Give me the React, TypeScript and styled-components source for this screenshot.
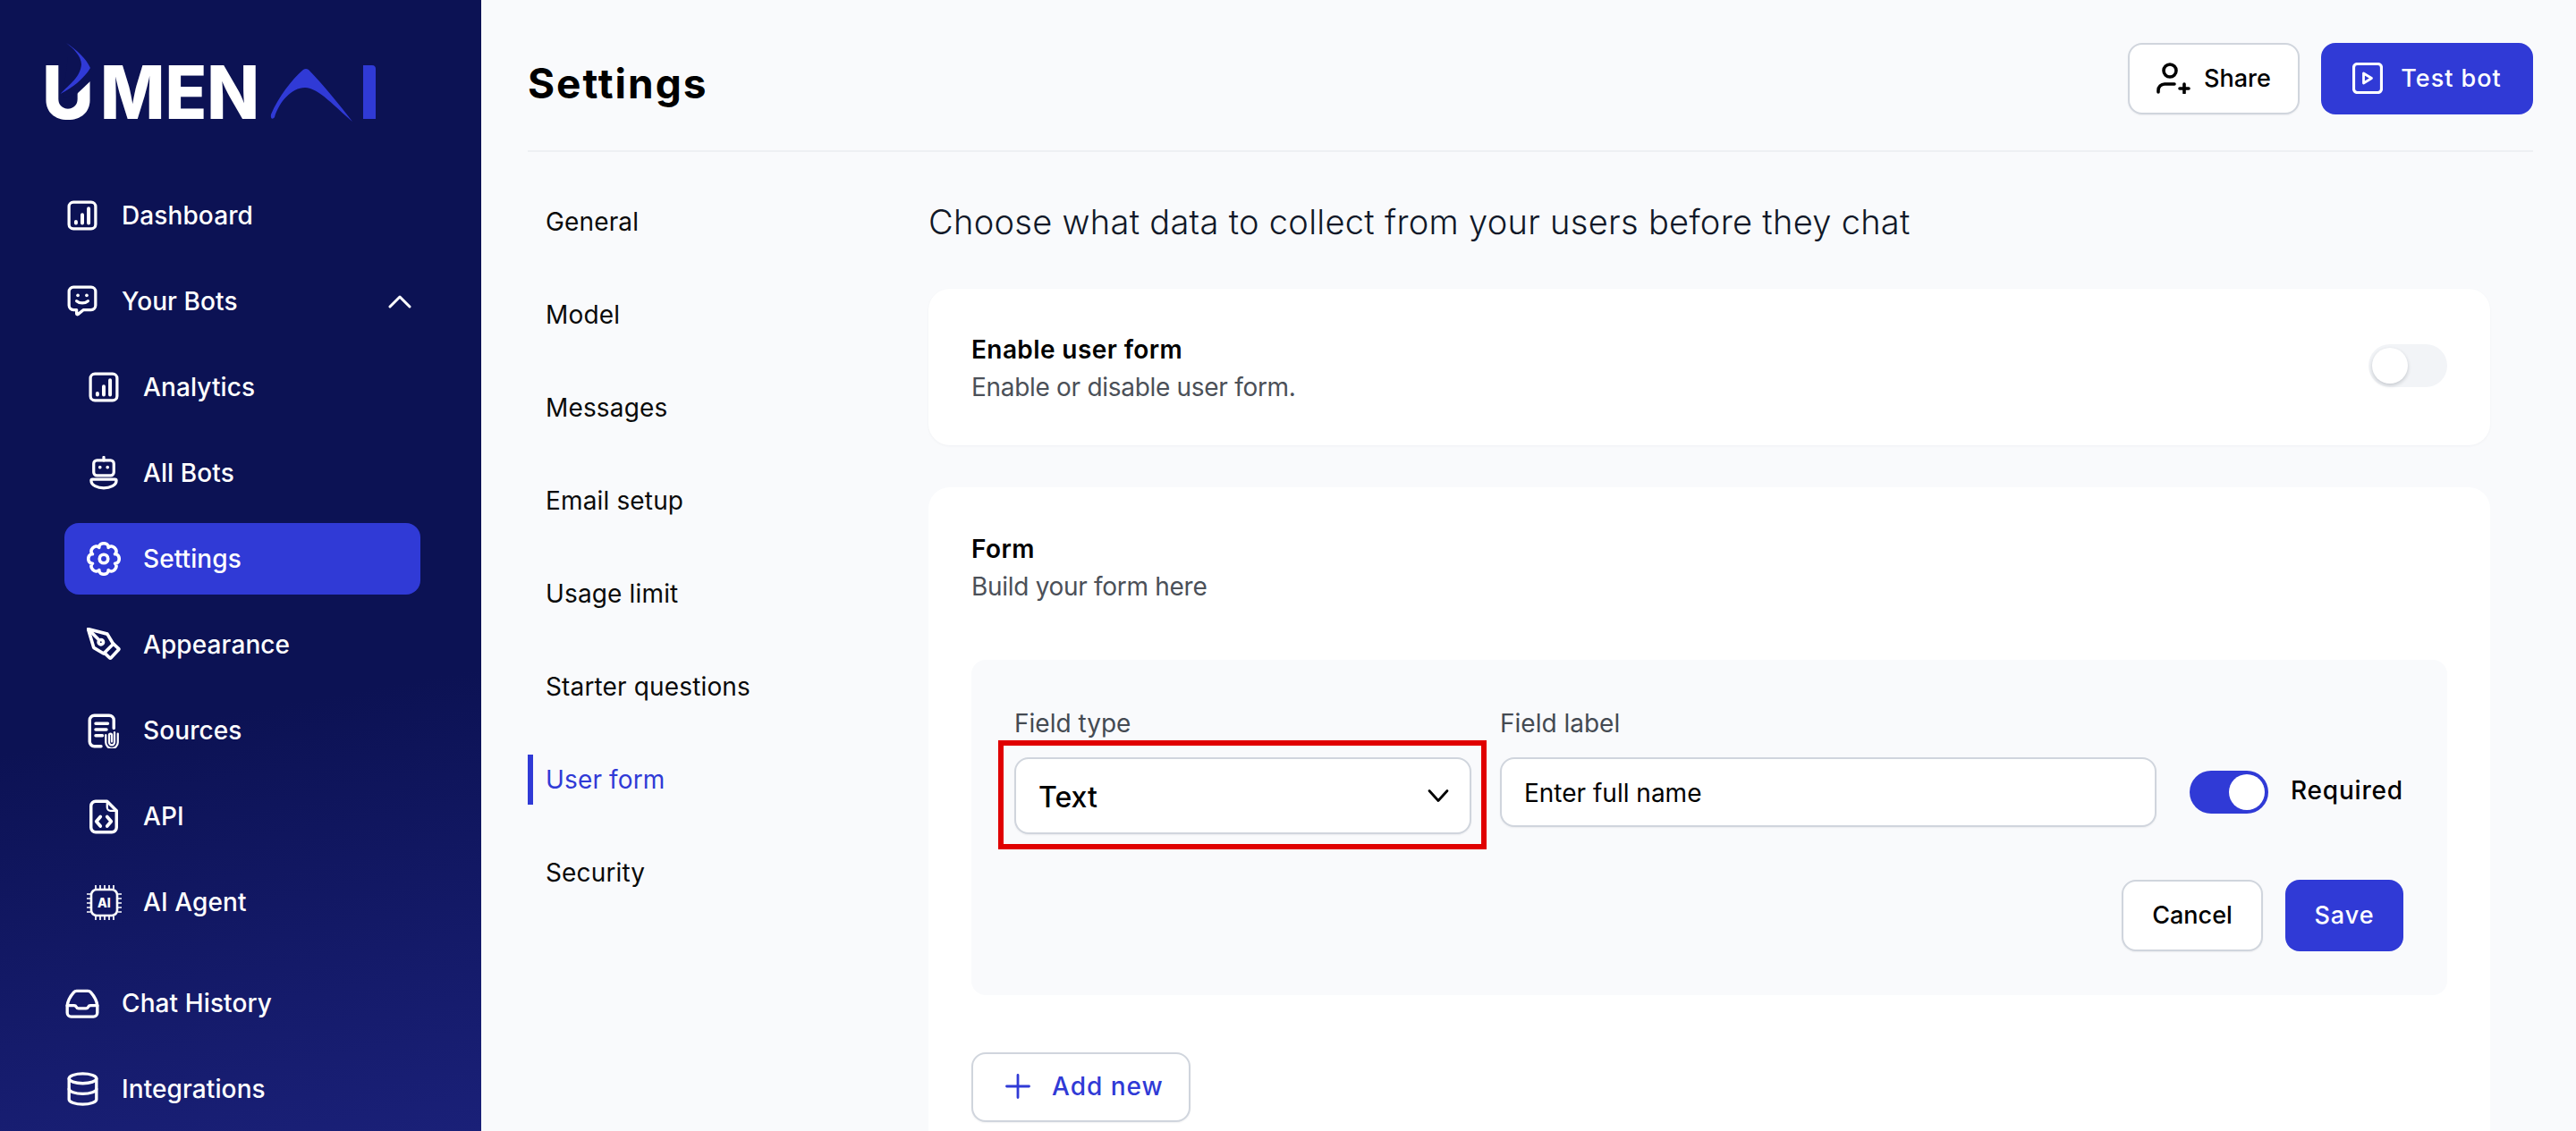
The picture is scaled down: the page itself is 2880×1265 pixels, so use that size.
import React from "react";
import styled, { createGlobalStyle } from "styled-components";

const PRIMARY = "#303ad6";
const BORDER = "#d0d5dd";

const GlobalStyle = createGlobalStyle`
  html, body {
    margin: 0;
    height: 1265px;
    overflow: hidden;
    background: #f9fafc;
    font-family: Inter, "Liberation Sans", sans-serif;
    color: #0a0a0a;
  }
  * { box-sizing: border-box; }
`;

const strokeProps = {
  fill: "none",
  stroke: "currentColor",
  strokeWidth: 2.3,
  strokeLinecap: "round" as const,
  strokeLinejoin: "round" as const,
};

// eight rounded lobes round the hub
const polar = (r: number, deg: number) => {
  const a = (deg * Math.PI) / 180;
  return `${(12 + r * Math.cos(a)).toFixed(2)} ${(12 + r * Math.sin(a)).toFixed(2)}`;
};

const gearPath = (() => {
  let d = `M${polar(8.6, -22.5)}`;
  for (let i = 0; i < 8; i++) {
    const mid = i * 45;
    d += `C${polar(12.4, mid - 17)} ${polar(12.4, mid + 17)} ${polar(8.6, mid + 22.5)}`;
  }
  return d + "z";
})();

interface IconProps {
  size?: number;
}

const BarsIcon: React.FC<IconProps> = ({ size = 34 }) => (
  <svg width={size} height={size} viewBox="0 0 24 24" {...strokeProps}>
    <rect x="1.5" y="1.5" width="21" height="21" rx="3.5" />
    <path d="M7 18v-1M12 18v-6.5M17 18V6.5" strokeWidth="2.8" />
  </svg>
);

const BotChatIcon: React.FC<IconProps> = ({ size = 34 }) => (
  <svg width={size} height={size + 2} viewBox="0 0 24 25.5" {...strokeProps}>
    <path d="M5 1.5h14a3.5 3.5 0 0 1 3.5 3.5v11a3.5 3.5 0 0 1-3.5 3.5h-6l-4.5 3.6c-.5.3-1 0-1-.5v-3.1H5A3.5 3.5 0 0 1 1.5 16V5A3.5 3.5 0 0 1 5 1.5z" />
    <circle cx="8.5" cy="8" r="1.3" fill="currentColor" stroke="none" />
    <circle cx="15.5" cy="8" r="1.3" fill="currentColor" stroke="none" />
    <path d="M7.5 12.5c2.6 2.2 6.4 2.2 9 0" />
  </svg>
);

const AllBotsIcon: React.FC<IconProps> = ({ size = 34 }) => (
  <svg width={size} height={size + 4} viewBox="0 0 24 27" {...strokeProps}>
    <path d="M12 1v2.5" />
    <rect x="4" y="3.5" width="16" height="12" rx="2.6" />
    <circle cx="9" cy="9" r="1.3" fill="currentColor" stroke="none" />
    <circle cx="15" cy="9" r="1.3" fill="currentColor" stroke="none" />
    <path d="M3 18.5h18c.6 0 1 .4 1 1 0 3.8-5 6-10 6s-10-2.200-10-6c0-.6.4-1 1-1z" />
  </svg>
);

const GearIcon: React.FC<IconProps> = ({ size = 38 }) => (
  <svg width={size} height={size} viewBox="0 0 24 24" {...strokeProps}>
    <path d={gearPath} />
    <circle cx="12" cy="12" r="3" />
  </svg>
);

const PenIcon: React.FC<IconProps> = ({ size = 38 }) => (
  <svg width={size} height={size} viewBox="0 0 24 24" {...strokeProps}>
    <path d="M1 1l13.500 3.500 4.200 7-6.800 6.800-7-4.200L1 1z" />
    <path d="M1.500 1.500l6.500 6.500" />
    <circle cx="10" cy="10.200" r="1.700" />
    <path d="M18.800 11.500l3.600 3.200c.3.300.3.700 0 1l-5.300 5.600c-.3.300-.7.300-1 0l-3.500-3.400" />
  </svg>
);

const SourcesIcon: React.FC<IconProps> = ({ size = 36 }) => (
  <svg width={size} height={size + 3} viewBox="0 0 24 26" {...strokeProps}>
    <path d="M10 24.500H5a3.500 3.500 0 0 1-3.500-3.500V5A3.500 3.500 0 0 1 5 1.500h11A3.500 3.500 0 0 1 19.500 5v6" />
    <path d="M6 7.500h9M6 12h8M6 16.500h5" />
    <path d="M20 14v7.500a2 2 0 0 1-4 0V16a1 1 0 0 1 2 0v5" strokeWidth="1.500" />
    <path d="M22.500 15v6.500a4.500 4.500 0 0 1-9 0V16" strokeWidth="1.500" />
  </svg>
);

const ApiIcon: React.FC<IconProps> = ({ size = 34 }) => (
  <svg width={size} height={size + 5} viewBox="0 0 22 26" {...strokeProps}>
    <path d="M5 1.500h8.500l7 7V21a3.500 3.500 0 0 1-3.500 3.500H5A3.500 3.500 0 0 1 1.500 21V5A3.500 3.500 0 0 1 5 1.500z" />
    <path d="M13.500 1.500V6a2.500 2.500 0 0 0 2.500 2.500h4.500" strokeWidth="1.500" />
    <path d="M8.500 13l-3 3.500 3 3.500M13.500 13l3 3.500-3 3.500" strokeWidth="2.500" />
  </svg>
);

const ChipIcon: React.FC<IconProps> = ({ size = 39 }) => (
  <svg width={size} height={size} viewBox="0 0 39 39" fill="none" stroke="currentColor" strokeWidth="2.600">
    <rect x="5" y="5" width="29" height="29" rx="6" />
    <path
      d="M10 0v4M15 0v4M20 0v4M25 0v4M30 0v4M10 35v4M15 35v4M20 35v4M25 35v4M30 35v4M0 10h4M0 15h4M0 20h4M0 25h4M0 30h4M35 10h4M35 15h4M35 20h4M35 25h4M35 30h4"
      strokeWidth="1.700"
    />
    <ChipText x="19.500" y="25">AI</ChipText>
  </svg>
);

const InboxIcon: React.FC<IconProps> = ({ size = 38 }) => (
  <svg width={size} height={size - 5} viewBox="0 0 26 22" {...strokeProps}>
    <path d="M1.500 12.500v5.500a3 3 0 0 0 3 3h17a3 3 0 0 0 3-3v-5.500C24 8 21 4 19.500 2.300a3 3 0 0 0-2.300-1H8.800a3 3 0 0 0-2.300 1C5 4 2 8 1.500 12.500z" />
    <path d="M1.500 12.500h5.300c.7 0 1.300.4 1.600 1 .3.700 1 1.200 1.700 1.200h5.800c.7 0 1.400-.5 1.700-1.200.3-.6.900-1 1.600-1h5.300" />
  </svg>
);

const DatabaseIcon: React.FC<IconProps> = ({ size = 35 }) => (
  <svg width={size} height={size + 3} viewBox="0 0 24 26" {...strokeProps}>
    <ellipse cx="12" cy="5" rx="10.500" ry="3.700" />
    <path d="M1.500 5v16c0 2 4.700 3.700 10.500 3.700S22.500 23 22.500 21V5" />
    <path d="M1.500 13c0 2 4.700 3.700 10.500 3.700S22.500 15 22.500 13" />
  </svg>
);

const ChevronUp = () => (
  <svg width="26" height="16" viewBox="0 0 26 16" fill="none" stroke="currentColor" strokeWidth="3" strokeLinecap="round" strokeLinejoin="round">
    <path d="M2 14L13 3l11 11" />
  </svg>
);

const ChevronDown = () => (
  <svg width="26" height="16" viewBox="0 0 26 16" fill="none" stroke="currentColor" strokeWidth="2.800" strokeLinecap="round" strokeLinejoin="round">
    <path d="M3 2.500l10 11 10-11" />
  </svg>
);

const ShareIcon = () => (
  <svg width="38" height="35" viewBox="0 0 38 35" fill="none" stroke="currentColor" strokeWidth="3.600" strokeLinecap="round">
    <circle cx="15" cy="9" r="7" />
    <path d="M2 33v-2a7 7 0 0 1 7-7h11" />
    <path d="M31 24v10M26 29h10" />
  </svg>
);

const PlayIcon = () => (
  <svg width="34" height="35" viewBox="0 0 34 35" fill="none" stroke="currentColor" strokeWidth="3.200" strokeLinejoin="round">
    <rect x="1.500" y="1.500" width="31" height="32" rx="4" />
    <path d="M12.500 12v11l9-5.500z" strokeWidth="2.800" />
  </svg>
);

const PlusIcon = () => (
  <svg width="28" height="28" viewBox="0 0 28 28" fill="none" stroke="currentColor" strokeWidth="2.800" strokeLinecap="round">
    <path d="M14 1.500v25M1.500 14h25" />
  </svg>
);

const Logo = () => (
  <LogoSvg width="384" height="115" viewBox="0 0 384 115">
    <LogoLetter x="1" y="89" textLength="58" lengthAdjust="spacingAndGlyphs">U</LogoLetter>
    <path d="M24 66l16-5 18-17V20H30z" fill="#0c1254" />
    <path
      d="M28 4C40 12 50 21 55 32 48 44 35 54 21.500 61 32 50 44 42 45 28 45 19 36 10 28 4z"
      fill={PRIMARY}
    />
    <LogoLetter x="66" y="89" textLength="178" lengthAdjust="spacingAndGlyphs">MEN</LogoLetter>
    <path
      d="M257 84C265 65 280 45 293 34Q296 32 299 34C315 50 335 75 348 92 330 77 310 54 295 54 280 54 266 70 261 87 259 90 256 89 257 84z"
      fill={PRIMARY}
    />
    <path d="M360 29h10c3 0 4 2 4 4v56h-14z" fill={PRIMARY} />
  </LogoSvg>
);

const botItems = [
  { label: "Analytics", icon: <BarsIcon /> },
  { label: "All Bots", icon: <AllBotsIcon /> },
  { label: "Settings", icon: <GearIcon />, active: true },
  { label: "Appearance", icon: <PenIcon /> },
  { label: "Sources", icon: <SourcesIcon /> },
  { label: "API", icon: <ApiIcon /> },
  { label: "AI Agent", icon: <ChipIcon /> },
];

const tabs = ["General", "Model", "Messages", "Email setup", "Usage limit", "Starter questions", "User form", "Security"];

export default function App() {
  return (
    <>
      <GlobalStyle />
      <Page>
        <Sidebar>
          <Logo />
          <Nav>
            <NavRow>
              <IconSlot><BarsIcon /></IconSlot>
              <span>Dashboard</span>
            </NavRow>
            <NavRow>
              <IconSlot><BotChatIcon /></IconSlot>
              <span>Your Bots</span>
              <NavChevron><ChevronUp /></NavChevron>
            </NavRow>
            {botItems.map((item) => (
              <NavRow key={item.label} $sub $active={item.active}>
                <IconSlot>{item.icon}</IconSlot>
                <span>{item.label}</span>
              </NavRow>
            ))}
            <NavRow $spaced>
              <IconSlot><InboxIcon /></IconSlot>
              <span>Chat History</span>
            </NavRow>
            <NavRow>
              <IconSlot><DatabaseIcon /></IconSlot>
              <span>Integrations</span>
            </NavRow>
          </Nav>
        </Sidebar>
        <Main>
          <Header>
            <Title>Settings</Title>
            <HeaderActions>
              <Button $width={192}><ShareIcon />Share</Button>
              <Button $primary $width={237}><PlayIcon />Test bot</Button>
            </HeaderActions>
          </Header>
          <Body>
            <Tabs>
              {tabs.map((tab) => (
                <Tab key={tab} $active={tab === "User form"}>{tab}</Tab>
              ))}
            </Tabs>
            <Content>
              <Lead>Choose what data to collect from your users before they chat</Lead>
              <ToggleCard>
                <div>
                  <CardTitle>Enable user form</CardTitle>
                  <CardHint>Enable or disable user form.</CardHint>
                </div>
                <Switch />
              </ToggleCard>
              <FormCard>
                <CardTitle>Form</CardTitle>
                <CardHint>Build your form here</CardHint>
                <Builder>
                  <BuilderRow>
                    <SelectField>
                      <FieldLabel>Field type</FieldLabel>
                      <SelectBox>
                        <SelectValue>Text</SelectValue>
                        <ChevronDown />
                        <Highlight />
                      </SelectBox>
                    </SelectField>
                    <InputField>
                      <FieldLabel>Field label</FieldLabel>
                      <InputBox>Enter full name</InputBox>
                    </InputField>
                    <RequiredToggle>
                      <Switch $on />
                      <RequiredLabel>Required</RequiredLabel>
                    </RequiredToggle>
                  </BuilderRow>
                  <BuilderActions>
                    <Button $width={158} $compact>Cancel</Button>
                    <Button $primary $width={132} $compact>Save</Button>
                  </BuilderActions>
                </Builder>
                <AddButton><PlusIcon />Add new</AddButton>
              </FormCard>
            </Content>
          </Body>
        </Main>
      </Page>
    </>
  );
}

const ChipText = styled.text`
  font-family: Inter, sans-serif;
  font-size: 14px;
  font-weight: 800;
  fill: currentColor;
  stroke: none;
  text-anchor: middle;
`;

const LogoSvg = styled.svg`
  display: block;
  margin-left: 46px;
`;

const LogoLetter = styled.text`
  font-family: Inter, "Liberation Sans", sans-serif;
  font-size: 82px;
  font-weight: 800;
  fill: #fff;
`;

const Page = styled.div`
  display: flex;
  width: 2880px;
  height: 1265px;
  overflow: hidden;
`;

const Sidebar = styled.aside`
  flex: 0 0 538px;
  height: 1265px;
  padding-top: 44px;
  color: #fff;
  background: linear-gradient(170deg, #0c1254 62%, #1a2078 100%);
`;

const Nav = styled.nav`
  display: flex;
  flex-direction: column;
  gap: 16px;
  margin: 42px 0 0 72px;
  width: 398px;
`;

const NavRow = styled.div<{ $sub?: boolean; $active?: boolean; $spaced?: boolean }>`
  flex: 0 0 80px;
  display: flex;
  align-items: center;
  gap: 24px;
  padding-left: ${(p) => (p.$sub ? "24px" : "0")};
  margin-top: ${(p) => (p.$spaced ? "17px" : "0")};
  border-radius: 16px;
  background: ${(p) => (p.$active ? PRIMARY : "transparent")};
  font-size: 28px;
  font-weight: 500;
  letter-spacing: 0.1px;
`;

const IconSlot = styled.span`
  flex: 0 0 40px;
  display: flex;
  align-items: center;
  justify-content: center;
`;

const NavChevron = styled.span`
  display: flex;
  margin-left: auto;
  margin-right: 10px;
`;

const Main = styled.main`
  flex: 1;
  min-width: 0;
  padding: 0 48px 0 52px;
`;

const Header = styled.header`
  display: flex;
  align-items: flex-start;
  justify-content: space-between;
  height: 170px;
  padding-top: 48px;
  border-bottom: 2px solid #eef0f3;
`;

const Title = styled.h1`
  margin: 17px 0 0;
  font-size: 46px;
  line-height: 56px;
  font-weight: 700;
  letter-spacing: 2px;
  color: #000;
`;

const HeaderActions = styled.div`
  display: flex;
  gap: 24px;
`;

const Button = styled.button<{ $primary?: boolean; $width: number; $compact?: boolean }>`
  display: flex;
  align-items: center;
  justify-content: center;
  gap: ${(p) => (p.$primary ? "20px" : "15px")};
  width: ${(p) => p.$width}px;
  height: 80px;
  padding: 0 0 2px;
  border: ${(p) => (p.$primary ? "none" : `2px solid ${BORDER}`)};
  border-radius: 16px;
  background: ${(p) => (p.$primary ? PRIMARY : "#fff")};
  box-shadow: ${(p) => (p.$primary ? "none" : "0 1px 2px rgba(16, 24, 40, 0.06)")};
  color: ${(p) => (p.$primary ? "#fff" : "#000")};
  font-family: inherit;
  font-size: 27px;
  font-weight: 500;
  letter-spacing: ${(p) => (p.$primary ? "1px" : "0")};
`;

const Body = styled.div`
  display: grid;
  grid-template-columns: 448px 1fr;
  padding: 50px 48px 0 0;
`;

const Tabs = styled.div`
  display: flex;
  flex-direction: column;
  gap: 48px;
`;

const Tab = styled.div<{ $active?: boolean }>`
  display: flex;
  align-items: center;
  height: 56px;
  padding-left: 14px;
  border-left: 6px solid ${(p) => (p.$active ? PRIMARY : "transparent")};
  color: ${(p) => (p.$active ? PRIMARY : "#0a0a0a")};
  font-size: 28px;
  font-weight: 400;
  letter-spacing: 0.15px;
`;

const Content = styled.div`
  display: flex;
  flex-direction: column;
`;

const Lead = styled.div`
  height: 56px;
  margin-bottom: 47px;
  color: #101828;
  font-size: 38px;
  line-height: 56px;
  font-weight: 300;
  letter-spacing: 0.3px;
`;

const ToggleCard = styled.section`
  display: flex;
  align-items: center;
  justify-content: space-between;
  height: 175px;
  padding: 2px 48px 0;
  border-radius: 24px;
  background: #fff;
  box-shadow: 0 1px 3px rgba(16, 24, 40, 0.04);
`;

const FormCard = styled.section`
  margin-top: 47px;
  padding: 51px 48px 60px;
  border-radius: 24px;
  background: #fff;
`;

const CardTitle = styled.div`
  font-size: 28px;
  line-height: 36px;
  font-weight: 600;
  letter-spacing: 0.4px;
  color: #000;
`;

const CardHint = styled.div`
  margin-top: 6px;
  font-size: 28px;
  line-height: 36px;
  font-weight: 400;
  letter-spacing: -0.300px;
  color: #4b5058;
`;

const Switch = styled.span<{ $on?: boolean }>`
  position: relative;
  flex: 0 0 88px;
  height: 48px;
  margin-bottom: ${(p) => (p.$on ? "0" : "6px")};
  border-radius: 24px;
  background: ${(p) => (p.$on ? PRIMARY : "#f2f4f7")};

  &::after {
    content: "";
    position: absolute;
    top: 4px;
    left: ${(p) => (p.$on ? "44px" : "4px")};
    width: 40px;
    height: 40px;
    border-radius: 50%;
    background: #fff;
    box-shadow: ${(p) => (p.$on ? "none" : "0 2px 4px rgba(16, 24, 40, 0.2)")};
  }
`;

const Builder = styled.div`
  margin-top: 64px;
  padding: 51px 49px 49px 48px;
  border-radius: 16px;
  background: #f9fafc;
`;

const BuilderRow = styled.div`
  display: flex;
  align-items: flex-start;
`;

const SelectField = styled.div`
  flex: 0 0 511px;
`;

const InputField = styled.div`
  flex: 0 0 734px;
  margin-left: 32px;
`;

const FieldLabel = styled.div`
  height: 58px;
  padding-top: 2px;
  font-size: 28px;
  line-height: 36px;
  font-weight: 400;
  color: #444a52;
`;

const SelectBox = styled.div`
  position: relative;
  display: flex;
  align-items: center;
  justify-content: space-between;
  height: 86px;
  padding: 0 22px 0 25px;
  border: 2px solid ${BORDER};
  border-radius: 16px;
  background: #fff;
  box-shadow: 0 1px 2px rgba(16, 24, 40, 0.06);
  color: #000;
`;

const SelectValue = styled.span`
  padding-top: 3px;
  font-size: 32px;
  font-weight: 500;
`;

const Highlight = styled.span`
  position: absolute;
  top: -21px;
  right: -19px;
  bottom: -19px;
  left: -20px;
  border: 6px solid #e00000;
  pointer-events: none;
`;

const InputBox = styled.div`
  display: flex;
  align-items: center;
  height: 78px;
  padding: 2px 0 0 25px;
  border: 2px solid ${BORDER};
  border-radius: 16px;
  background: #fff;
  box-shadow: 0 1px 2px rgba(16, 24, 40, 0.06);
  font-size: 28px;
  color: #000;
`;

const RequiredToggle = styled.div`
  display: flex;
  align-items: center;
  gap: 25px;
  margin: 73px 0 0 37px;
`;

const RequiredLabel = styled.span`
  margin-bottom: 4px;
  font-size: 28px;
  font-weight: 500;
  letter-spacing: 0.8px;
  color: #000;
`;

const BuilderActions = styled.div`
  display: flex;
  justify-content: flex-end;
  gap: 25px;
  margin-top: 51px;
`;

const AddButton = styled.button`
  display: flex;
  align-items: center;
  justify-content: flex-start;
  gap: 24px;
  width: 245px;
  height: 78px;
  margin-top: 64px;
  padding: 0 0 2px 36px;
  border: 2px solid ${BORDER};
  border-radius: 16px;
  background: #fff;
  box-shadow: 0 1px 2px rgba(16, 24, 40, 0.06);
  color: ${PRIMARY};
  font-family: inherit;
  font-size: 28px;
  font-weight: 500;
  letter-spacing: 1px;
`;
